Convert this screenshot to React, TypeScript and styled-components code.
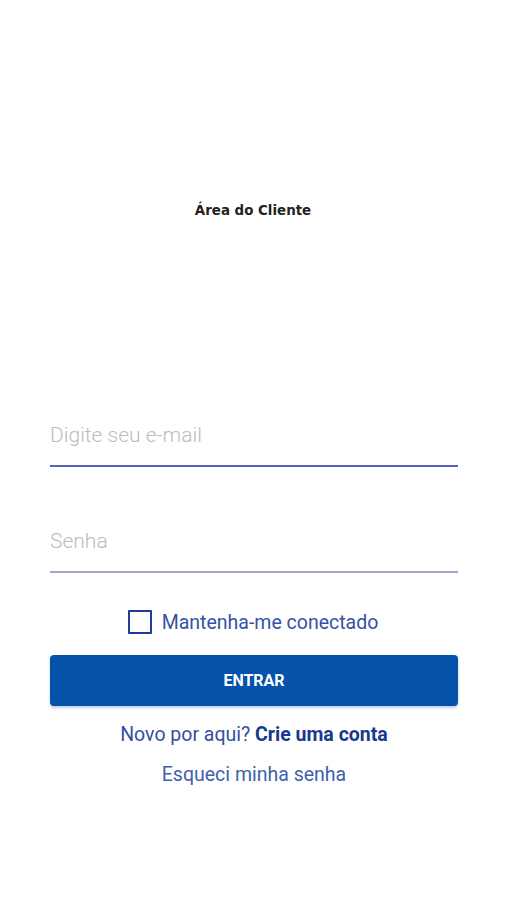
import styled, { createGlobalStyle } from "styled-components";

const GlobalStyle = createGlobalStyle`
  html, body {
    margin: 0;
    padding: 0;
    background: #fff;
  }
  body {
    font-family: Roboto, "Liberation Sans", sans-serif;
  }
`;

const App = () => {
  return (
    <>
      <GlobalStyle />
      <Page>
        <Header>
          <TitleText>Área do Cliente</TitleText>
        </Header>
        <Form>
          <Field placeholder="Digite seu e-mail" type="email" $line="#5564b9" />
          <Field placeholder="Senha" type="password" $line="#a3a3d3" />
          <RememberRow>
            <CheckBox />
            <RememberText>Mantenha-me conectado</RememberText>
          </RememberRow>
          <SubmitButton>ENTRAR</SubmitButton>
          <LinkText>
            Novo por aqui? <Strong>Crie uma conta</Strong>
          </LinkText>
          <ForgotText>Esqueci minha senha</ForgotText>
        </Form>
      </Page>
    </>
  );
};

export default App;

const Page = styled.div`
  width: 506px;
  height: 900px;
  display: flex;
  flex-direction: column;
  background: #fff;
`;

const Header = styled.div`
  display: flex;
  justify-content: center;
  padding-top: 203px;
  height: 206px;
`;

const TitleText = styled.span`
  font-family: "DejaVu Sans", "Open Sans", sans-serif;
  font-weight: 700;
  font-size: 13.4px;
  color: #222;
`;

const Form = styled.div`
  display: flex;
  flex-direction: column;
  padding: 0 48px 0 50px;
`;

const Field = styled.input<{ $line: string }>`
  width: 100%;
  box-sizing: border-box;
  height: 58px;
  padding: 0 0 4px;
  margin-bottom: 48px;
  border: none;
  border-bottom: 2px solid ${({ $line }) => $line};
  background: transparent;
  font-family: Roboto, "Liberation Sans", sans-serif;
  font-weight: 300;
  font-size: 21px;
  color: #333;
  outline: none;

  &::placeholder {
    color: #bcbcbc;
  }
`;

const RememberRow = styled.div`
  display: flex;
  align-items: center;
  justify-content: center;
  gap: 10px;
  margin-top: -11px;
  padding-right: 2px;
`;

const CheckBox = styled.span`
  width: 20px;
  height: 20px;
  border: 2px solid #1e3c9e;
  border-radius: 1px;
`;

const RememberText = styled.span`
  font-size: 19.5px;
  color: #3552a6;
`;

const SubmitButton = styled.button`
  margin-top: 21px;
  height: 51px;
  width: 100%;
  border: none;
  border-radius: 4px;
  background: #0552aa;
  box-shadow: 0 2px 3px rgba(0, 60, 140, 0.25);
  color: #fff;
  font-family: Roboto, "Liberation Sans", sans-serif;
  font-weight: 700;
  font-size: 16px;
`;

const LinkText = styled.div`
  margin-top: 17px;
  text-align: center;
  font-size: 19.5px;
  color: #3450a2;
`;

const Strong = styled.span`
  font-weight: 700;
  color: #163a8e;
`;

const ForgotText = styled.div`
  margin-top: 17px;
  text-align: center;
  font-size: 19.5px;
  color: #4260ad;
`;
